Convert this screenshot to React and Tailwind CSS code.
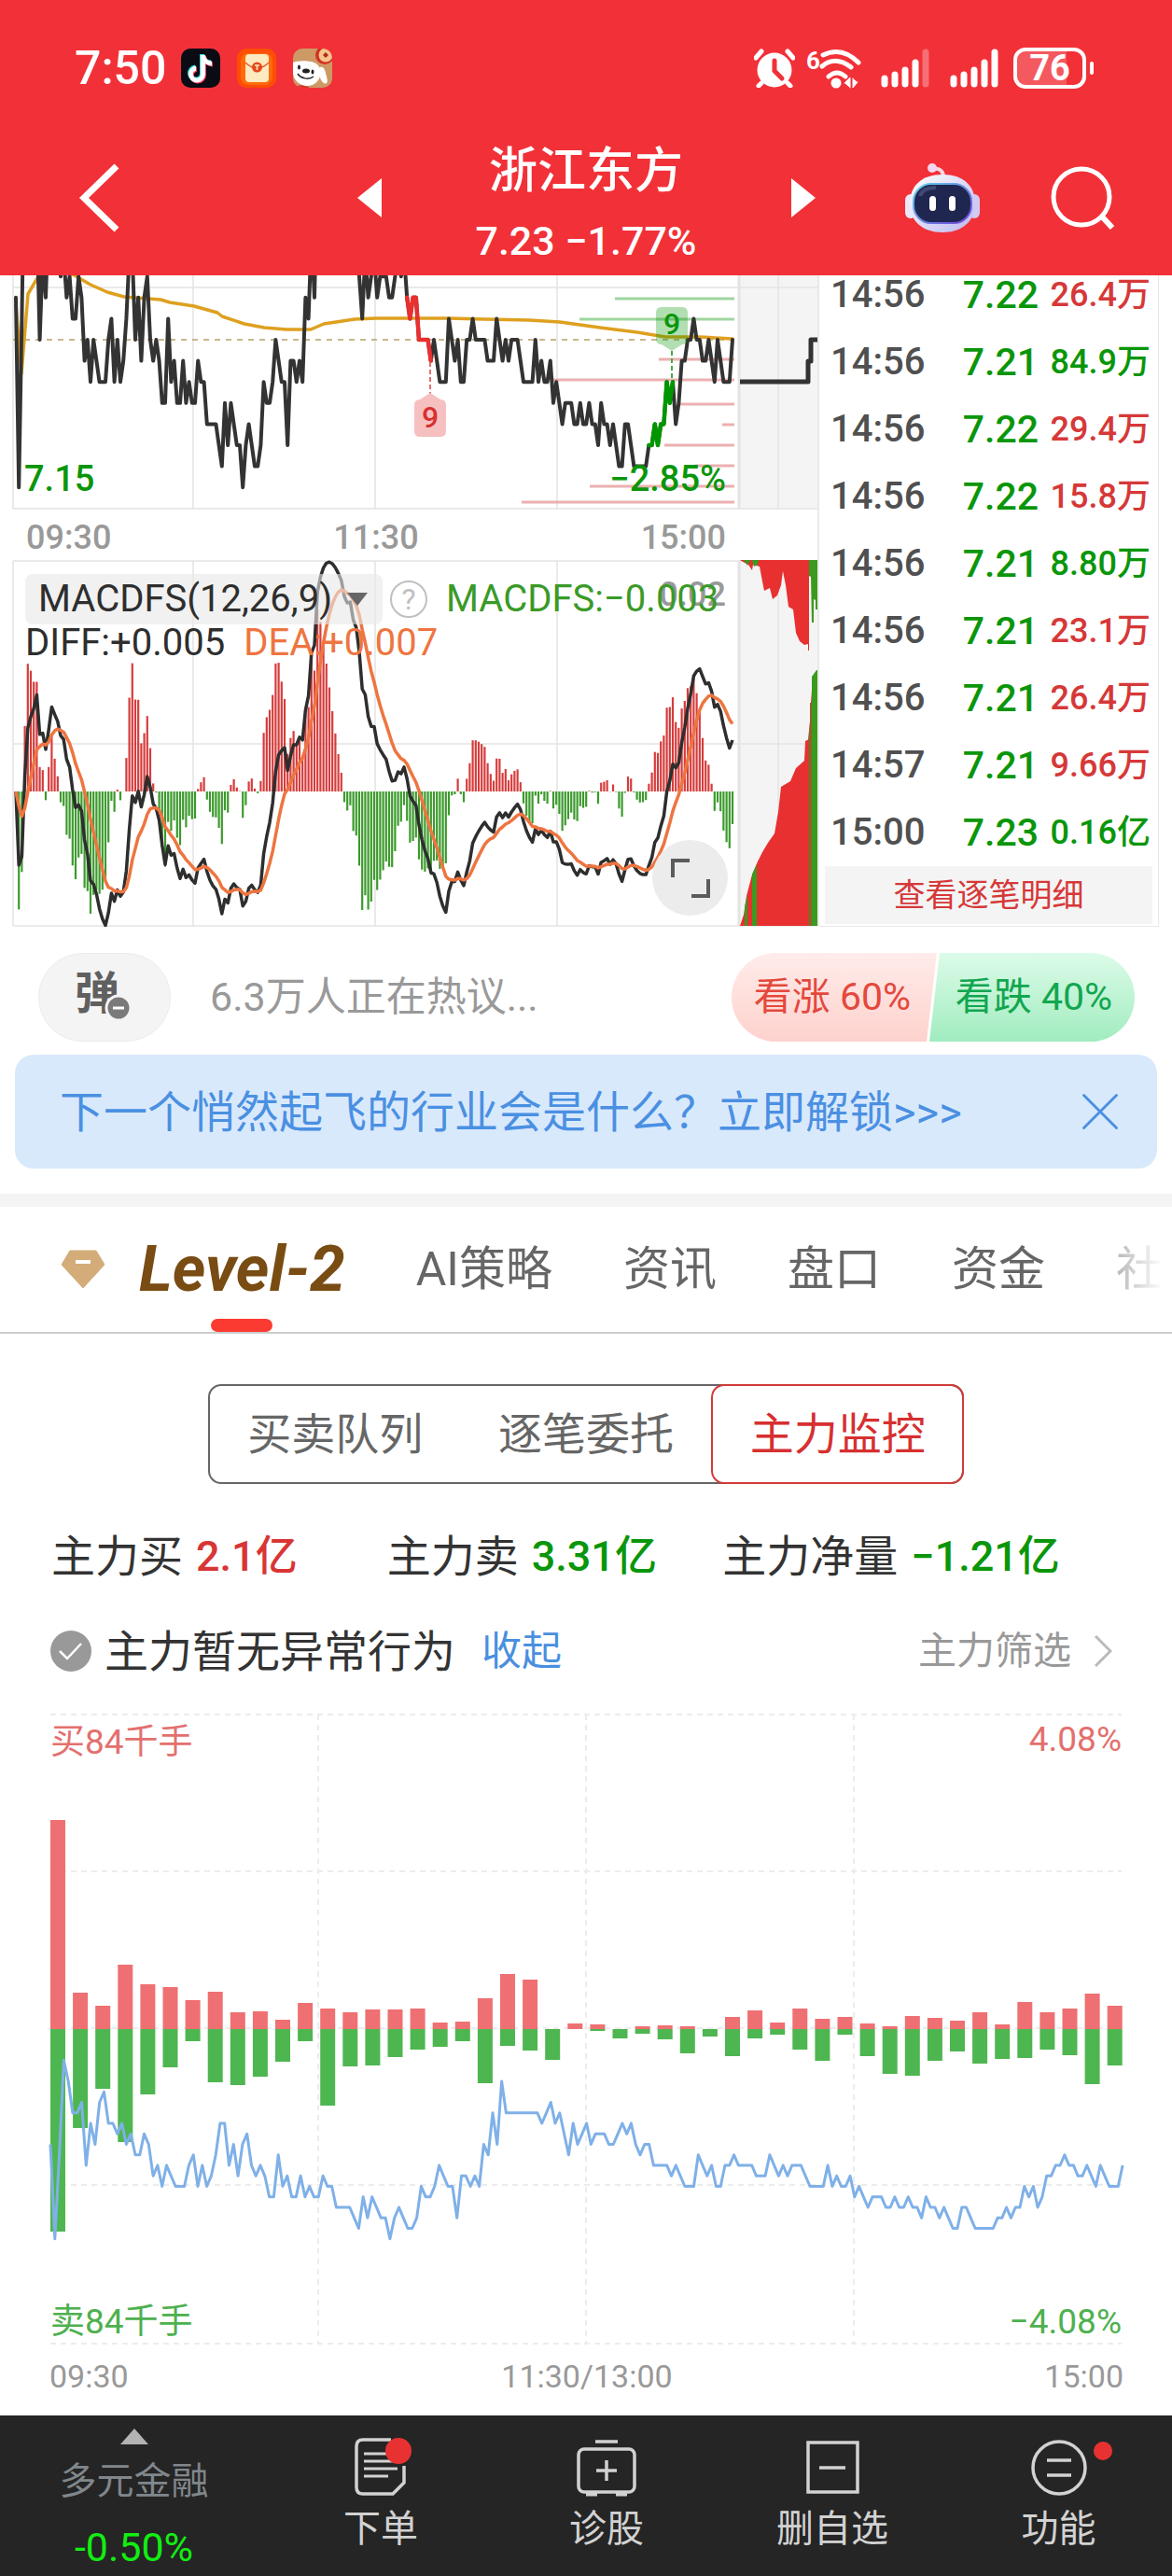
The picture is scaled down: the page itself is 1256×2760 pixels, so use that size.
import { useState } from "react";
import { X } from "lucide-react";

// minute closes in cents above 7.00, 09:30 -> 15:00
const prices = [
  25, 16, 24, 33, 31, 28, 28, 29, 23, 27, 25, 29, 30, 27, 27, 26, 27, 25, 26, 24,
  24, 26, 25, 22, 23, 21, 23, 22, 21, 21, 21, 23, 24, 21, 23, 21, 22, 24, 27, 27,
  23, 25, 22, 25, 26, 23, 22, 23, 22, 20, 20, 24, 21, 22, 20, 20, 22, 20, 21, 20,
  20, 22, 21, 21, 19, 19, 19, 19, 18, 17, 20, 18, 20, 19, 18, 18, 16, 18, 19, 18,
  17, 17, 18, 21, 20, 20, 21, 23, 22, 21, 21, 18, 22, 22, 21, 22, 21, 25, 24, 28,
  25, 31, 28, 28, 28, 28, 28, 28, 28, 28, 27, 28, 29, 27, 28, 26, 24, 27, 25, 26,
  27, 25, 26, 26, 26, 25, 25, 26, 27, 26, 27, 25, 24, 25, 25, 23, 23, 23, 23, 22,
  23, 22, 21, 21, 21, 24, 23, 22, 23, 21, 21, 23, 23, 24, 23, 23, 23, 23, 22, 22,
  22, 24, 23, 22, 23, 22, 23, 23, 23, 22, 21, 21, 21, 21, 23, 21, 22, 21, 21, 22,
  20, 21, 20, 19, 20, 20, 20, 19, 19, 20, 19, 19, 20, 19, 19, 18, 20, 19, 19, 18,
  19, 18, 17, 17, 19, 19, 18, 17, 17, 17, 17, 17, 18, 18, 19, 18, 19, 19, 21, 20,
  21, 19, 20, 22, 22, 23, 23, 24, 23, 23, 22, 22, 23, 22, 21, 23, 22, 21, 21, 21,
  23,
];

const buys = [
  224, 39, 25, 69, 48, 45, 31, 40, 18, 19, 10, 28, 22, 18, 21, 21, 22, 7, 8, 33, 59, 53, 0, 6,
  5, 0, 3, 4, 3, 0, 13, 20, 7, 22, 11, 13, 6, 3, 14, 12, 9, 18, 5, 29, 18, 22, 38, 25,
];

const sells = [
  217, 106, 64, 121, 70, 41, 13, 57, 60, 51, 35, 13, 82, 40, 39, 30, 22, 19, 13, 58, 18, 23, 33, 0,
  2, 10, 5, 11, 26, 8, 29, 10, 6, 22, 34, 6, 29, 48, 50, 34, 24, 37, 32, 31, 22, 28, 59, 39,
];

const trades = [
  { time: "14:56", price: "7.22", volume: "26.4万", up: true },
  { time: "14:56", price: "7.21", volume: "84.9万", up: false },
  { time: "14:56", price: "7.22", volume: "29.4万", up: true },
  { time: "14:56", price: "7.22", volume: "15.8万", up: true },
  { time: "14:56", price: "7.21", volume: "8.80万", up: false },
  { time: "14:56", price: "7.21", volume: "23.1万", up: true },
  { time: "14:56", price: "7.21", volume: "26.4万", up: true },
  { time: "14:57", price: "7.21", volume: "9.66万", up: true },
  { time: "15:00", price: "7.23", volume: "0.16亿", up: false },
];

// order book depth next to the price line: [y, start x, colour]
const depth = [
  [320, 659, "#9fd6a0"],
  [342, 621, "#9fd6a0"],
  [385, 706, "#ecb0b0"],
  [407, 593, "#ecb0b0"],
  [433, 728, "#ecb0b0"],
  [455, 774, "#ecb0b0"],
  [477, 712, "#ecb0b0"],
  [499, 745, "#ecb0b0"],
  [521, 632, "#ecb0b0"],
  [538, 559, "#ecb0b0"],
];

function ema(values, n) {
  const out = [values[0]];
  for (let i = 1; i < values.length; i++) {
    out.push(out[i - 1] + ((values[i] - out[i - 1]) * 2) / (n + 1));
  }
  return out;
}

const fast = ema(prices, 12);
const slow = ema(prices, 26);
const diff = fast.map((v, i) => v - slow[i]);
const dea = ema(diff, 9);
const macd = diff.map((v, i) => 2 * (v - dea[i]));

const minuteX = (i) => 17 + i * 3.2;
const priceY = (v) => 364 - (v - 23) * 22.6;
const macdY = (v) => 848 - v * 110;

const toPoints = (values, x, y, offset = 0) =>
  values.map((v, i) => `${x(i + offset).toFixed(1)},${y(v).toFixed(1)}`).join(" ");

function StatusBar() {
  return (
    <div className="flex h-[146px] items-center justify-between pl-20 pr-[84px] text-white">
      <div className="flex items-center">
        <span className="mr-4 text-[50px] font-medium leading-none">7:50</span>
        <div className="flex gap-[18px]">
          <svg viewBox="0 0 42 42" className="h-[42px] w-[42px]">
            <rect width="42" height="42" rx="10" fill="#0b0b14" />
            <path d="M20 6h5c.6 4 3 6.300 7 6.500v5c-3 0-5-1-7-2.500v11.500a9 9 0 1 1-10-9v5.200a4 4 0 1 0 5 3.800z" fill="#27e3de" />
            <path d="M22 8h5c.6 4 3 6.300 7 6.500v5c-3 0-5-1-7-2.500v11.500a9 9 0 1 1-10-9v5.200a4 4 0 1 0 5 3.800z" fill="#fb3260" />
            <path d="M21 7h5c.6 4 3 6.300 7 6.500v5c-3 0-5-1-7-2.500v11.500a9 9 0 1 1-10-9v5.200a4 4 0 1 0 5 3.800z" fill="#fff" />
          </svg>
          <svg viewBox="0 0 42 42" className="h-[42px] w-[42px]">
            <rect width="42" height="42" rx="10" fill="#fe4d05" />
            <rect x="4" y="5" width="34" height="34" rx="8" fill="#ff6a0c" />
            <rect x="9" y="6" width="25" height="30" rx="4" fill="#fdeac0" />
            <path d="M9 15c4 4 8 6 12.500 6s8.500-2 12.500-6" stroke="#e8622b" strokeWidth="1.500" fill="none" />
            <circle cx="21.500" cy="20" r="5.500" fill="#e5481c" />
            <path d="M19 18h5M21.500 18v5" stroke="#fdeac0" strokeWidth="1.600" />
          </svg>
          <svg viewBox="0 0 42 42" className="h-[42px] w-[42px]">
            <clipPath id="dogClip">
              <rect width="42" height="42" rx="10" />
            </clipPath>
            <g clipPath="url(#dogClip)">
              <rect width="42" height="42" fill="#cd9a66" />
              <path d="M0 15c4-2 20-3 26 2 3 3 5 8 3 13-2 6-7 10-14 10C7 40 0 33 0 26z" fill="#fff" />
              <path d="M28 21c3-3 6 0 7 5s3 9 1 11-6-2-7-6z" fill="#fff" />
              <path d="M5 40c4-2 7 0 12 1l-1 2H6z" fill="#d8342c" />
              <ellipse cx="14" cy="24" rx="4" ry="2.500" fill="#222" />
              <ellipse cx="6.500" cy="20" rx="1.500" ry="2.500" fill="#222" />
              <ellipse cx="21" cy="25" rx="1.500" ry="2.500" fill="#222" />
              <path d="M5 27c3 5 12 7 17 3" stroke="#222" strokeWidth="1.500" fill="none" />
              <circle cx="34" cy="7" r="10" fill="#d33023" />
              <circle cx="35" cy="7" r="7.500" fill="#f6c48c" />
              <path d="M35 4l3 3-3 3-3-3z" fill="#b3281c" />
            </g>
          </svg>
        </div>
      </div>
      <div className="flex items-center">
        <svg viewBox="0 0 44 42" className="mr-3 h-[42px] w-11" fill="none" stroke="#fff" strokeLinecap="round">
          <circle cx="22" cy="23" r="18.500" fill="#fff" stroke="none" />
          <path d="M2 10l6-7M42 10l-6-7M8 37l-3 3M36 37l3 3" strokeWidth="5" />
          <path d="M22 13v11l8 8" stroke="#f23038" strokeWidth="5" />
        </svg>
        <svg viewBox="0 0 60 44" className="mr-5 h-11 w-[60px]" fill="none" stroke="#fff" strokeLinecap="round">
          <text x="0" y="23" className="fill-white text-[26px] font-bold" stroke="none">6</text>
          <path d="M18 8q20-10 38 8M17 20q14-12 31 1M24 31q9-8 18 0" strokeWidth="5" />
          <circle cx="32" cy="38" r="5.500" fill="#fff" stroke="none" />
          <path d="M41 38l6-6v11M50 33v10l5-6" fill="#fff" strokeWidth="1" />
        </svg>
        <svg viewBox="0 0 52 42" className="mr-[22px] h-[42px] w-[52px]" stroke="#fff" strokeWidth="7" strokeLinecap="round">
          <path d="M4 32v6M15 28v10M26 23v15M37 15v23" />
          <path d="M48 4v34" opacity=".3" />
        </svg>
        <svg viewBox="0 0 52 42" className="mr-4 h-[42px] w-[52px]" stroke="#fff" strokeWidth="7" strokeLinecap="round">
          <path d="M4 32v6M15 28v10M26 23v15M37 15v23M48 4v34" />
        </svg>
        <div className="relative flex h-11 w-[78px] items-center justify-center overflow-hidden rounded-[13px] border-4 border-white text-[38px] font-bold leading-none">
          <div className="absolute inset-y-0 left-0 w-[76%] bg-white/20" />
          <span className="relative">76</span>
        </div>
        <div className="ml-1 h-3.5 w-1 rounded-full bg-white" />
      </div>
    </div>
  );
}

function Header() {
  return (
    <header className="bg-[#f23038] text-white">
      <StatusBar />
      <div className="grid h-[149px] grid-cols-[1fr_439px_1fr]">
        <div className="flex items-center justify-between pb-[18px] pl-[84px]">
          <button aria-label="返回">
            <svg viewBox="0 0 44 74" className="h-[74px] w-11" fill="none" stroke="#fff" strokeWidth="7">
              <path d="M41 3L6 37l35 34" />
            </svg>
          </button>
          <button aria-label="上一只">
            <svg viewBox="0 0 26 42" className="h-[42px] w-[26px]" fill="#fff">
              <path d="M26 0v42L0 21z" />
            </svg>
          </button>
        </div>
        <div className="text-center">
          <h1 className="text-[52px] font-medium leading-[76px]">浙江东方</h1>
          <p className="text-[43px] font-medium leading-[73px]">7.23 −1.77%</p>
        </div>
        <div className="flex items-center pb-[18px] pr-[62px]">
          <button aria-label="下一只">
            <svg viewBox="0 0 26 42" className="h-[42px] w-[26px]" fill="#fff">
              <path d="M0 0v42l26-21z" />
            </svg>
          </button>
          <button aria-label="智能助手" className="ml-auto">
            <svg viewBox="0 0 82 76" className="h-[76px] w-[82px]">
              <defs>
                <linearGradient id="shell" x1="0" y1="0" x2="1" y2="1">
                  <stop offset="0" stopColor="#ffffff" />
                  <stop offset="1" stopColor="#bcb8ee" />
                </linearGradient>
                <linearGradient id="rim" x1="0" y1="0" x2="1" y2="1">
                  <stop offset="0" stopColor="#5fd3e8" />
                  <stop offset="1" stopColor="#7440dc" />
                </linearGradient>
              </defs>
              <path d="M31 7c7-1 11 2 11 9" stroke="#fbd9e4" strokeWidth="4" fill="none" />
              <circle cx="30" cy="6" r="5" fill="#f4d6ee" />
              <rect x="1" y="34" width="12" height="26" rx="6" fill="#ebe8fb" />
              <rect x="69" y="34" width="12" height="26" rx="6" fill="#cfcbf4" />
              <path d="M41 13c22 0 35 12 35 31S62 75 41 75 6 63 6 44s13-31 35-31z" fill="url(#shell)" />
              <rect x="10" y="23" width="62" height="42" rx="19" fill="#1f2750" stroke="url(#rim)" strokeWidth="2" />
              <path d="M17 36c2-7 8-9 17-9" stroke="#57608c" strokeWidth="4" fill="none" opacity=".6" />
              <rect x="27" y="36" width="7" height="16" rx="3.500" fill="#fff" />
              <rect x="48" y="36" width="7" height="16" rx="3.500" fill="#fff" />
            </svg>
          </button>
          <button aria-label="搜索" className="ml-[75px]">
            <svg viewBox="0 0 68 68" className="h-[68px] w-[68px]" fill="none" stroke="#fff" strokeWidth="5">
              <circle cx="33" cy="33" r="30" />
              <path d="M54 53l12 13" strokeWidth="6" />
            </svg>
          </button>
        </div>
      </div>
    </header>
  );
}

function PriceChart() {
  return (
    <svg viewBox="0 295 878 698" className="block h-auto w-full" fill="none">
      <defs>
        <clipPath id="priceClip">
          <rect x="0" y="295" width="792" height="251" />
        </clipPath>
        <clipPath id="macdClip">
          <rect x="0" y="600" width="792" height="393" />
        </clipPath>
      </defs>

      {/* panels and grid */}
      <rect x="792" y="295" width="85" height="250" fill="#f4f4f4" />
      <rect x="792" y="601" width="85" height="391" fill="#f4f4f4" />
      <g stroke="#e3e3e3" strokeWidth="1.500">
        <path d="M14 308H877M14 545H877M14 601H877M14 797H877M14 992H877" />
        <path d="M14 295V545M14 601V992M207 295V545M207 601V992M402 295V545M402 601V992M597 295V545M597 601V992" />
        <path d="M834 295V545M834 601V992M877 295V992" />
        <path d="M792 295V545M792 601V992" strokeWidth="3" />
      </g>

      {/* price */}
      <path d="M14 364H787" stroke="#b8a06a" strokeWidth="1.500" strokeDasharray="6 6" />
      <g strokeWidth="3">
        {depth.map(([y, x, color]) => (
          <path key={y} d={`M${x} ${y}H787`} stroke={color} />
        ))}
      </g>
      <g clipPath="url(#priceClip)" strokeLinejoin="round" strokeLinecap="round">
        <polyline
          points="17,327 23,400 30,315 40,298 57,290 78,294 97,305 115,313 133,318 172,321 182,324 208,328 233,335 238,339 262,347 283,351 307,353 333,353 347,347 380,342 403,341 480,341 567,343 600,345 643,351 683,356 713,361 750,361 785,363"
          stroke="#dea01f"
          strokeWidth="3.500"
        />
        <polyline points={toPoints(prices, minuteX, priceY)} stroke="#333" strokeWidth="4" />
        <polyline points={toPoints(prices.slice(131, 140), minuteX, priceY, 131)} stroke="#e83030" strokeWidth="4.500" />
        <polyline points={toPoints(prices.slice(212, 221), minuteX, priceY, 212)} stroke="#009600" strokeWidth="4.500" />
      </g>
      <path d="M793 409H866V387H869V364H876" stroke="#333" strokeWidth="5" strokeLinejoin="round" />

      {/* nine-turn markers */}
      <path d="M461 388V422" stroke="#e07070" strokeWidth="2" strokeDasharray="5 3" />
      <path d="M450 428L461 421L472 428Q478 428 478 434V462Q478 468 472 468H450Q444 468 444 462V434Q444 428 450 428z" fill="#f6c0c1" />
      <text x="461" y="458" textAnchor="middle" className="fill-[#d93030] text-[32px] font-medium">9</text>
      <path d="M720 376V408" stroke="#4aa64a" strokeWidth="2" strokeDasharray="5 3" />
      <path d="M709 329H731Q737 329 737 335V363Q737 369 731 369L720 376L709 369Q703 369 703 363V335Q703 329 709 329z" fill="#009600" opacity=".3" />
      <text x="720" y="358" textAnchor="middle" className="fill-[#0a960a] text-[32px] font-medium">9</text>

      <text x="26" y="526" className="fill-[#0a960a] text-[38px] font-medium">7.15</text>
      <text x="778" y="526" textAnchor="end" className="fill-[#0a960a] text-[38px] font-medium">−2.85%</text>
      <g className="fill-[#999] text-[36px] font-medium">
        <text x="28" y="588">09:30</text>
        <text x="403" y="588" textAnchor="middle">11:30</text>
        <text x="778" y="588" textAnchor="end">15:00</text>
      </g>

      {/* macd */}
      <text x="778" y="649" textAnchor="end" className="fill-[#999] text-[36px] font-medium">0.02</text>
      <g clipPath="url(#macdClip)">
        {macd.map((v, i) => (
          <path
            key={i}
            d={`M${minuteX(i).toFixed(1)} 848V${macdY(v).toFixed(1)}`}
            stroke={v > 0 ? "#d63c3c" : "#3c9a2c"}
            strokeWidth="2.200"
          />
        ))}
        <polyline points={toPoints(diff, minuteX, macdY)} stroke="#2e2e2e" strokeWidth="3.500" strokeLinejoin="round" />
        <polyline points={toPoints(dea, minuteX, macdY)} stroke="#ee7540" strokeWidth="3.500" strokeLinejoin="round" />
      </g>

      {/* auction volume */}
      <path d="M793 600L798 603L802 605L806 611L807 605L814 607L817 623L819 633L825 630L828 642L833 638L837 627L839 612L842 627L845 650L850 653L853 678L857 687L862 691L866 690V697H867V600z" fill="#e93030" />
      <path d="M797 600L801 606L804 600zM806 600L808 607L812 605L813 600zM867 600V617L869 618L870 667H872V642L874 643V653H876V600z" fill="#3a9a20" />
      <path d="M793 992L797 980L800 960L806 937L812 923L817 913L823 903L830 893L834 870L837 843L847 837L853 823L862 815L863 794L867 792L868 773L869 753L871 725V992z" fill="#e93030" />
      <path d="M798 992V972L801 958V992zM806 992V937L811 926V992zM870 992V725L875 718H876V992z" fill="#3a9a20" />
      <path d="M866 992V792L868 773V753H870V992z" fill="#93602a" />
    </svg>
  );
}

function MarketPanel() {
  return (
    <section className="grid grid-cols-[878fr_378fr]">
      <div className="relative">
        <PriceChart />
        <div className="absolute left-[27px] top-80 flex items-center text-[40px] leading-[54px]">
          <div className="relative mr-2">
            <select aria-label="指标" className="h-[54px] w-[383px] appearance-none rounded-lg bg-[#e8e8e8]/60 pl-3.5 leading-[54px] text-[#2e2e2e]">
              <option>MACDFS(12,26,9)</option>
              <option>VOL(5,10)</option>
            </select>
            <svg viewBox="0 0 22 14" className="pointer-events-none absolute right-4 top-5 h-3.5 w-[22px]" fill="#666">
              <path d="M0 0h22L11 14z" />
            </svg>
          </div>
          <button aria-label="指标说明" className="mr-5 h-10 w-10 rounded-full border-2 border-[#c0c0c0] text-[32px] leading-9 text-[#c0c0c0]">
            ?
          </button>
          <span className="text-[#3a9a28]">MACDFS:−0.003</span>
        </div>
        <div className="absolute left-[27px] top-[370px] flex gap-5 text-[40px] leading-[48px]">
          <span className="text-[#2e2e2e]">DIFF:+0.005</span>
          <span className="text-[#ee7540]">DEA:+0.007</span>
        </div>
        <button aria-label="全屏" className="absolute bottom-3 right-[98px] flex h-[81px] w-[81px] items-center justify-center rounded-full bg-[#ececec]">
          <svg viewBox="0 0 42 42" className="h-[42px] w-[42px]" fill="none" stroke="#5c5c5c" strokeWidth="4">
            <path d="M2 20V2h18M22 40h18V22" />
          </svg>
        </button>
      </div>
      <div className="mr-3.5 overflow-hidden border-b border-r border-[#e8e8e8]">
        <table className="-mt-[15px] w-full">
          <tbody>
            {trades.map((t, i) => (
              <tr key={i} className="h-[72px] font-medium leading-none">
                <td className="pl-3 text-[40px] text-[#505050]">{t.time}</td>
                <td className="text-right text-[41px] text-[#0a960a]">{t.price}</td>
                <td className={`w-32 pr-2 text-right text-[36px] ${t.up ? "text-[#d63838]" : "text-[#0a960a]"}`}>{t.volume}</td>
              </tr>
            ))}
          </tbody>
        </table>
        <div className="px-1.5">
          <button className="h-[62px] w-full bg-[#f4f4f4] text-[34px] leading-none text-[#d63838]">查看逐笔明细</button>
        </div>
      </div>
    </section>
  );
}

function Discussion() {
  return (
    <section className="mt-7 flex items-center pl-[41px] pr-10">
      <button aria-label="弹幕" className="relative h-[95px] w-[142px] rounded-full border border-[#ececec] bg-[#f4f4f4] pb-2 pr-4 text-[48px] font-bold leading-none text-[#606060]">
        弹
        <svg viewBox="0 0 30 30" className="absolute bottom-5 right-10 h-[30px] w-[30px]">
          <circle cx="15" cy="15" r="13" fill="#7a7a7a" stroke="#f4f4f4" strokeWidth="3" />
          <path d="M9 15h12" stroke="#fff" strokeWidth="3" />
        </svg>
      </button>
      <a href="#talk" className="ml-[42px] text-[43px] leading-none text-[#999]">6.3万人正在热议...</a>
      <div className="ml-auto flex h-[95px] overflow-hidden rounded-full text-[41px] leading-none">
        <button className="w-[220px] bg-linear-to-b from-[#ffecea] to-[#fdd2cd] pr-1 text-[#e4483c] [clip-path:polygon(0_0,100%_0,95%_100%,0_100%)]">
          看涨 60%
        </button>
        <button className="-ml-2 w-[220px] bg-linear-to-b from-[#dcfbe9] to-[#a0ecbf] pl-1 text-[#12a650] [clip-path:polygon(5%_0,100%_0,100%_100%,0_100%)]">
          看跌 40%
        </button>
      </div>
    </section>
  );
}

function Banner() {
  const [open, setOpen] = useState(true);
  if (!open) return null;

  return (
    <div className="mx-4 mt-3.5 flex h-[122px] items-center justify-between rounded-[20px] bg-[#d9e9fc] pl-12 pr-[26px] text-[#4a90e2]">
      <a href="#unlock" className="text-[47px] leading-none">{"下一个悄然起飞的行业会是什么？立即解锁>>>"}</a>
      <button aria-label="关闭" onClick={() => setOpen(false)}>
        <X className="h-[70px] w-[70px]" strokeWidth={1} />
      </button>
    </div>
  );
}

function Tabs() {
  return (
    <nav className="relative mt-[27px] flex h-[150px] items-center gap-[76px] overflow-hidden whitespace-nowrap border-b-2 border-t-[14px] border-b-[#ccc] border-t-[#f4f4f4] pl-[65px] text-[50px] leading-none text-[#666]">
      <button className="flex h-full items-center">
        <svg viewBox="0 0 48 42" className="mr-9 h-[42px] w-12">
          <path d="M10 1h28l9 15-23 25L1 16z" fill="#d3ac79" stroke="#d3ac79" strokeLinejoin="round" />
          <path d="M16 13h16" stroke="#fff" strokeWidth="4" />
        </svg>
        <span className="relative flex h-full items-center text-[68px] font-bold italic text-[#784c12]">
          Level-2
          <span className="absolute bottom-0 left-1/2 h-3.5 w-[66px] -translate-x-1/2 rounded-full bg-[#fb3a32]" />
        </span>
      </button>
      <button>AI策略</button>
      <button>资讯</button>
      <button>盘口</button>
      <button>资金</button>
      <button>社区</button>
      <div className="pointer-events-none absolute inset-y-0 right-0 w-24 bg-linear-to-l from-white from-10% to-white/20" />
    </nav>
  );
}

function FundFlowChart() {
  const barX = (i) => 54 + i * 24.1;

  return (
    <svg viewBox="0 1835 1256 731" className="mt-9 block h-auto w-full" fill="none">
      <g stroke="#ececec" strokeWidth="2" strokeDasharray="6 5">
        <path d="M54 1837H1202M54 2005H1202M54 2173H1202M54 2341H1202M54 2511H1202" />
        <path d="M341 1837V2511M628 1837V2511M915 1837V2511" />
      </g>
      {buys.map((h, i) => (
        <g key={i}>
          <rect x={barX(i)} y={2174 - h} width="16" height={h} fill="#ef7072" />
          <rect x={barX(i)} y="2174" width="16" height={sells[i]} fill="#4eb650" />
        </g>
      ))}
      <polyline
        points={toPoints(prices, (i) => 54 + i * 4.788, (v) => 2320 - (v - 23) * 11.25)}
        stroke="#7fb0e8"
        strokeWidth="3"
        strokeLinejoin="round"
      />
      <g className="text-[37px]">
        <text x="54" y="1879" className="fill-[#e3706e]">买84千手</text>
        <text x="1202" y="1876" textAnchor="end" className="fill-[#e3706e]">4.08%</text>
        <text x="54" y="2500" className="fill-[#4eb04f]">卖84千手</text>
        <text x="1202" y="2500" textAnchor="end" className="fill-[#4eb04f]">−4.08%</text>
      </g>
      <g className="fill-[#999] text-[34px]">
        <text x="53" y="2558">09:30</text>
        <text x="629" y="2558" textAnchor="middle">11:30/13:00</text>
        <text x="1204" y="2558" textAnchor="end">15:00</text>
      </g>
    </svg>
  );
}

function MainForce() {
  return (
    <section>
      <div className="mx-auto mt-[54px] grid h-[107px] w-[810px] grid-cols-3 rounded-[14px] border-2 border-[#666] text-[47px] leading-none text-[#666]">
        <button>买卖队列</button>
        <button>逐笔委托</button>
        <button className="-my-0.5 -mr-0.5 rounded-[14px] border-2 border-[#d23a3a] text-[#d63030]">主力监控</button>
      </div>

      <dl className="mt-12 grid grid-cols-3 whitespace-nowrap pl-[55px] pr-[122px] leading-[60px]">
        <div className="flex gap-3.5">
          <dt className="text-[47px] text-[#333]">主力买</dt>
          <dd className="text-[45px] font-medium text-[#d93535]">2.1亿</dd>
        </div>
        <div className="flex gap-3.5">
          <dt className="text-[47px] text-[#333]">主力卖</dt>
          <dd className="text-[45px] font-medium text-[#0a960a]">3.31亿</dd>
        </div>
        <div className="flex gap-3.5">
          <dt className="text-[47px] text-[#333]">主力净量</dt>
          <dd className="text-[45px] font-medium text-[#0a960a]">−1.21亿</dd>
        </div>
      </dl>

      <div className="mt-[41px] flex h-[60px] items-center px-[54px] leading-none">
        <svg viewBox="0 0 44 44" className="mr-3.5 h-11 w-11" fill="none">
          <circle cx="22" cy="22" r="22" fill="#999" />
          <path d="M10 22l8 8 15-16" stroke="#fff" strokeWidth="2.500" />
        </svg>
        <p className="text-[47px] text-[#333]">主力暂无异常行为</p>
        <button className="ml-7 text-[43px] text-[#4a8fdf]">收起</button>
        <button className="ml-auto flex items-center text-[41px] text-[#999]">
          主力筛选
          <svg viewBox="0 0 20 34" className="ml-6 mr-2.5 h-[34px] w-5" fill="none" stroke="#bbb" strokeWidth="3">
            <path d="M2 1l16 16L2 33" />
          </svg>
        </button>
      </div>

      <FundFlowChart />
    </section>
  );
}

const icons = {
  order: (
    <>
      <path d="M57 30V48L45 60H13Q6 60 6 53V9Q6 2 13 2H43" />
      <path d="M14 17h26M14 25h32M14 33h36M14 41h26" strokeWidth="3" />
      <circle cx="51" cy="14" r="14" fill="#e83232" stroke="none" />
    </>
  ),
  diagnose: (
    <>
      <rect x="2" y="12" width="60" height="46" rx="6" />
      <path d="M20 4h24M32 24v22M21 35h22" />
      <path d="M10 60h12M42 60h12" strokeWidth="5" />
    </>
  ),
  remove: (
    <>
      <rect x="6" y="5" width="53" height="53" />
      <path d="M18 32h28" />
    </>
  ),
  more: (
    <>
      <circle cx="32" cy="32" r="28" />
      <path d="M19 24h26M19 40h26" />
      <circle cx="79" cy="14" r="10" fill="#e83232" stroke="none" />
    </>
  ),
};

function BottomNav() {
  return (
    <nav className="mt-[22px] grid h-[172px] grid-cols-[287fr_242fr_242fr_242fr_243fr] bg-[#252525] text-[40px] text-[#d2d2d2]">
      <button className="flex flex-col items-center pt-3.5">
        <svg viewBox="0 0 30 17" className="h-[17px] w-[30px]" fill="#b3b3b3">
          <path d="M15 0l15 17H0z" />
        </svg>
        <span className="mt-2.5 leading-[60px] text-[#80878c]">多元金融</span>
        <span className="mt-2.5 text-[43px] leading-[60px] text-[#12ee12]">-0.50%</span>
      </button>
      {[
        ["order", "下单"],
        ["diagnose", "诊股"],
        ["remove", "删自选"],
        ["more", "功能"],
      ].map(([icon, label]) => (
        <button key={icon} className="flex flex-col items-center pt-6">
          <svg viewBox="0 0 64 64" className="h-16 w-16 overflow-visible" fill="none" stroke="#d2d2d2" strokeWidth="3.500">
            {icons[icon]}
          </svg>
          <span className="mt-1 leading-[60px]">{label}</span>
        </button>
      ))}
    </nav>
  );
}

export default function App() {
  return (
    <div className="min-h-screen w-full overflow-x-hidden bg-white font-[Roboto,'Noto_Sans_CJK_SC',sans-serif]">
      <Header />
      <main>
        <MarketPanel />
        <Discussion />
        <Banner />
        <Tabs />
        <MainForce />
      </main>
      <BottomNav />
    </div>
  );
}
